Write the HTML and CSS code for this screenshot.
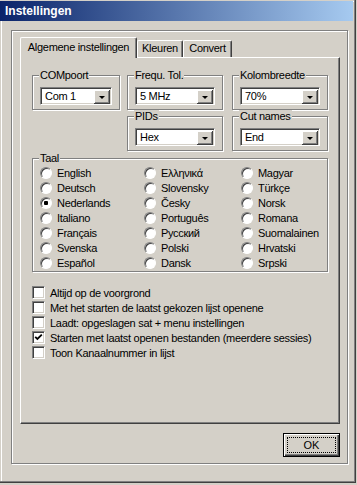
FILE: index.html
```html
<!DOCTYPE html>
<html lang="nl">
<head>
    <meta charset="UTF-8">
    <title>Instellingen</title>
    <link rel="stylesheet" href="styles.css">
</head>
<body>
    <div class="window">
        <div class="titlebar">Instellingen</div>

        <div class="frame">
            <!-- Tabbladen -->
            <div class="tabs">
                <div class="tab active tab-general">Algemene instellingen</div>
                <div class="tab tab-colors">Kleuren</div>
                <div class="tab tab-convert">Convert</div>
            </div>

            <div class="page">
                <div class="settings">
                    <fieldset class="group com">
                        <legend>COMpoort</legend>
                        <div class="combo"><span>Com 1</span><i class="drop"><b></b></i></div>
                    </fieldset>
                    <fieldset class="group freq">
                        <legend>Frequ. Tol.</legend>
                        <div class="combo"><span>5 MHz</span><i class="drop"><b></b></i></div>
                    </fieldset>
                    <fieldset class="group width">
                        <legend>Kolombreedte</legend>
                        <div class="combo"><span>70%</span><i class="drop"><b></b></i></div>
                    </fieldset>
                    <fieldset class="group pids">
                        <legend>PIDs</legend>
                        <div class="combo"><span>Hex</span><i class="drop"><b></b></i></div>
                    </fieldset>
                    <fieldset class="group cut">
                        <legend>Cut names</legend>
                        <div class="combo"><span>End</span><i class="drop"><b></b></i></div>
                    </fieldset>
                </div>

                <!-- Taalkeuze -->
                <fieldset class="group lang">
                    <legend>Taal</legend>
                    <div class="languages">
                        <label class="opt"><span class="radio"></span>English</label>
                        <label class="opt"><span class="radio"></span>Deutsch</label>
                        <label class="opt"><span class="radio checked"></span>Nederlands</label>
                        <label class="opt"><span class="radio"></span>Italiano</label>
                        <label class="opt"><span class="radio"></span>Français</label>
                        <label class="opt"><span class="radio"></span>Svenska</label>
                        <label class="opt"><span class="radio"></span>Español</label>
                        <label class="opt"><span class="radio"></span>Ελληνικά</label>
                        <label class="opt"><span class="radio"></span>Slovensky</label>
                        <label class="opt"><span class="radio"></span>Česky</label>
                        <label class="opt"><span class="radio"></span>Português</label>
                        <label class="opt"><span class="radio"></span>Русский</label>
                        <label class="opt"><span class="radio"></span>Polski</label>
                        <label class="opt"><span class="radio"></span>Dansk</label>
                        <label class="opt"><span class="radio"></span>Magyar</label>
                        <label class="opt"><span class="radio"></span>Türkçe</label>
                        <label class="opt"><span class="radio"></span>Norsk</label>
                        <label class="opt"><span class="radio"></span>Romana</label>
                        <label class="opt"><span class="radio"></span>Suomalainen</label>
                        <label class="opt"><span class="radio"></span>Hrvatski</label>
                        <label class="opt"><span class="radio"></span>Srpski</label>
                    </div>
                </fieldset>

                <!-- Opties -->
                <div class="checks">
                    <label class="opt"><span class="check"></span>Altijd op de voorgrond</label>
                    <label class="opt"><span class="check"></span>Met het starten de laatst gekozen lijst openene</label>
                    <label class="opt"><span class="check"></span>Laadt: opgeslagen sat + menu instellingen</label>
                    <label class="opt"><span class="check"><svg width="9" height="9" viewBox="0 0 9 9"><polyline points="1.2,3.8 3.4,6 7.8,1.6" fill="none" stroke="#000" stroke-width="1.8"/></svg></span>Starten met laatst openen bestanden (meerdere sessies)</label>
                    <label class="opt"><span class="check"></span>Toon Kanaalnummer in lijst</label>
                </div>
            </div>

            <div class="footer">
                <button class="btn"><span>OK</span></button>
            </div>
        </div>
    </div>
</body>
</html>
```

FILE: styles.css
```css
body {
    margin: 0;
    background-color: #d4d0c8;
    font-family: 'Liberation Sans', Arial, sans-serif;
    font-size: 11px;
    letter-spacing: -0.3px;
    color: #000;
}
.window {
    width: 356px;
    height: 483px;
    box-sizing: border-box;
    padding: 1px 3px 0 0;
    background-color: #d4d0c8;
    box-shadow: inset -1px -1px #404040, inset -2px -2px #808080, inset 1px 1px #d4d0c8, inset 2px 2px #fff;
}
.titlebar {
    height: 20px;
    line-height: 20px;
    padding-left: 5px;
    background: linear-gradient(to right, #0a246a, #a6caf0);
    color: #fff;
    font-size: 12px;
    font-weight: bold;
    letter-spacing: 0;
}

/* Groepskader rond het hele venster */
.frame {
    margin: 9px 0 0 11px;
    width: 337px;
    box-sizing: border-box;
    border: 1px solid #808080;
    box-shadow: inset 1px 1px #fff, 1px 1px #fff;
    padding: 6px 7px 6px 8px;
}

/* Tabbladen */
.tabs {
    display: flex;
    align-items: flex-end;
    height: 20px;
}
.tab {
    height: 17px;
    box-sizing: border-box;
    border-top: 1px solid #fff;
    border-left: 1px solid #fff;
    border-right: 1px solid #404040;
    border-radius: 2px 2px 0 0;
    box-shadow: inset -1px 0 #808080;
    text-align: center;
    line-height: 15px;
    background-color: #d4d0c8;
}
.tab.active {
    height: 21px;
    margin-bottom: -1px;
    line-height: 18px;
    position: relative;
    z-index: 1;
}
.tab-general { width: 117px; }
.tab-colors { width: 46px; }
.tab-convert { width: 49px; }

.page {
    width: 320px;
    height: 367px;
    box-sizing: border-box;
    border: 1px solid;
    border-color: #fff #404040 #404040 #fff;
    box-shadow: inset -1px -1px #808080;
    padding: 11px 11px 0 11px;
}

/* Keuzelijsten bovenaan */
.settings {
    display: grid;
    grid-template-columns: 88px 7px 96px 9px 96px;
}
.com { grid-column: 1; grid-row: 1; }
.freq { grid-column: 3; grid-row: 1; }
.width { grid-column: 5; grid-row: 1; }
.pids { grid-column: 3; grid-row: 2; }
.cut { grid-column: 5; grid-row: 2; }

.group {
    margin: 0;
    min-width: 0;
    padding: 5px 7px 4px 7px;
    border: 1px solid #808080;
    box-shadow: inset 1px 1px #fff, 1px 1px #fff;
}
.group legend {
    padding: 0 1px;
    margin-left: -1px;
    line-height: 13px;
    background-color: #d4d0c8;
}

.combo {
    height: 18px;
    box-sizing: border-box;
    display: flex;
    align-items: center;
    padding-left: 4px;
    background-color: #fff;
    border: 1px solid;
    border-color: #808080 #fff #fff #808080;
    box-shadow: inset 1px 1px #404040, inset -1px -1px #d4d0c8;
}
.drop {
    margin: 1px 1px 0 auto;
    width: 16px;
    height: 14px;
    display: flex;
    justify-content: center;
    align-items: center;
    background-color: #d4d0c8;
    box-shadow: inset -1px -1px #404040, inset 1px 1px #fff, inset -2px -2px #808080;
}
.drop b {
    width: 0;
    height: 0;
    border-left: 3px solid transparent;
    border-right: 3px solid transparent;
    border-top: 3px solid #000;
    margin-top: 1px;
}

/* Taal */
.lang {
    margin-top: 1px;
    padding: 0 7px 1px 7px;
}
.languages {
    display: grid;
    grid-template-columns: 104px 97px 1fr;
    grid-template-rows: repeat(7, 15px);
    grid-auto-flow: column;
}
.opt {
    display: flex;
    align-items: center;
    gap: 5px;
    height: 15px;
    white-space: nowrap;
}
.radio {
    width: 12px;
    height: 12px;
    box-sizing: border-box;
    border-radius: 50%;
    border: 1px solid;
    border-color: #808080 #fff #fff #808080;
    box-shadow: inset 1px 1px #404040;
    background-color: #fff;
}
.radio.checked {
    background: radial-gradient(circle, #000 0 2px, #fff 2.5px);
}

/* Opties */
.checks {
    margin-top: 13px;
}
.checks .opt {
    gap: 5px;
}
.check {
    width: 13px;
    height: 13px;
    box-sizing: border-box;
    border: 1px solid;
    border-color: #808080 #fff #fff #808080;
    box-shadow: inset 1px 1px #404040, inset -1px -1px #d4d0c8;
    background-color: #fff;
    display: flex;
    justify-content: center;
    align-items: center;
}

.footer {
    display: flex;
    justify-content: flex-end;
    margin-top: 9px;
}
.btn {
    width: 57px;
    height: 24px;
    padding: 3px;
    margin: 0;
    border: 1px solid #000;
    background-color: #d4d0c8;
    box-shadow: inset 1px 1px #fff, inset -1px -1px #404040, inset -2px -2px #808080;
    font: inherit;
    color: #000;
}
.btn span {
    display: block;
    height: 100%;
    box-sizing: border-box;
    border: 1px dotted #000;
    line-height: 14px;
    text-align: center;
}
```
